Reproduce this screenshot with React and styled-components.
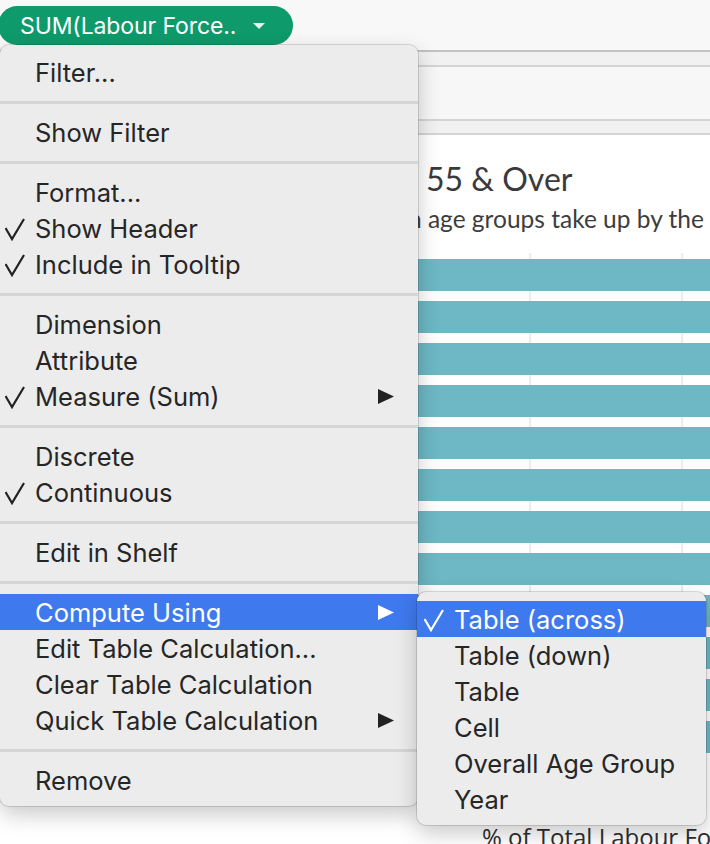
import styled, { createGlobalStyle } from "styled-components";

const GlobalStyle = createGlobalStyle`
  html, body {
    margin: 0;
    padding: 0;
    background: #ffffff;
    overflow: hidden;
  }
`;

const Page = styled.div`
  position: relative;
  width: 710px;
  height: 844px;
  overflow: hidden;
  background: #ffffff;
  font-family: Inter, "Liberation Sans", sans-serif;
`;

const TopBar = styled.div`
  height: 52px;
  background: #f8f8f8;
  border-bottom: 2px solid #c2c2c2;
  display: flex;
  align-items: flex-start;
  padding-top: 6px;
  box-sizing: border-box;
`;

const Pill = styled.div`
  height: 39px;
  margin-left: -2px;
  padding: 0 28px 0 22px;
  border-radius: 20px;
  background: #0e9a6b;
  color: #ffffff;
  display: flex;
  align-items: center;
  gap: 17px;
  font-family: Inter, "Liberation Sans", sans-serif;
  font-size: 23px;
  letter-spacing: -0.1px;
`;

const ShelfBand = styled.div`
  height: ${(props) => props.h}px;
  background: ${(props) => props.bg};
  border-bottom: 2px solid #d4d4d4;
  box-sizing: border-box;
`;

const ChartArea = styled.div`
  background: #ffffff;
  padding-top: 24px;
`;

const Title = styled.div`
  font-family: Lato, "Open Sans", sans-serif;
  font-size: 32px;
  line-height: 40px;
  color: #3a3a3a;
  padding-left: 426px;
`;

const Subtitle = styled.div`
  font-family: Lato, "Open Sans", sans-serif;
  font-size: 24.5px;
  line-height: 30px;
  color: #3d3d3d;
  padding-left: 408px;
  margin-top: 5px;
  white-space: nowrap;
`;

const Plot = styled.div`
  margin-top: 19px;
  padding: 6px 0 16px;
  display: flex;
  flex-direction: column;
  gap: 10px;
  background:
    linear-gradient(to right, transparent 529px, #ececec 529px, #ececec 531px, transparent 531px),
    linear-gradient(to right, transparent 681px, #ececec 681px, #ececec 683px, transparent 683px);
`;

const Bar = styled.div`
  height: 32px;
  background: #6eb7c4;
`;

const AxisTitle = styled.div`
  margin-top: 54px;
  padding-left: 482px;
  font-family: "Open Sans", Lato, sans-serif;
  font-weight: 500;
  font-size: 24px;
  line-height: 28px;
  color: #2e2e2e;
  white-space: nowrap;
`;

const Menu = styled.div`
  position: absolute;
  top: ${(props) => props.top}px;
  left: ${(props) => props.left};
  width: ${(props) => props.width}px;
  background: #ececec;
  border-radius: 9px;
  padding: 9px 0 8px;
  box-shadow: 0 0 0 1px rgba(0, 0, 0, 0.13), 0 8px 22px rgba(0, 0, 0, 0.22);
  z-index: ${(props) => props.z || 10};
`;

const Item = styled.div`
  position: relative;
  height: 36px;
  display: flex;
  align-items: center;
  padding-right: 24px;
  font-size: 25.5px;
  color: ${(props) => (props.active ? "#ffffff" : "#262626")};
  background: ${(props) => (props.active ? "#3f79ee" : "transparent")};
  white-space: nowrap;
`;

const CheckCell = styled.span`
  width: ${(props) => props.w}px;
  flex: none;
  display: flex;
  align-items: center;
  padding-left: ${(props) => props.off}px;
  box-sizing: border-box;
  height: 100%;
`;

const Label = styled.span`
  flex: 1;
`;

const Separator = styled.div`
  height: 24px;
  display: flex;
  align-items: center;
  &::after {
    content: "";
    display: block;
    width: 100%;
    height: 3px;
    background: #d6d6d6;
  }
`;

const Check = ({ color }) => (
  <svg width="21" height="36" viewBox="0 0 21 36">
    <polyline points="0.5,18 7,29 19,9" fill="none" stroke={color} strokeWidth="2.2" />
  </svg>
);

const Arrow = ({ color }) => (
  <svg width="16" height="15" viewBox="0 0 16 15">
    <polygon points="0,0 16,7.5 0,15" fill={color} />
  </svg>
);

const Caret = () => (
  <svg width="12" height="6" viewBox="0 0 12 6">
    <polygon points="0,0 12,0 6,6" fill="#e8f5ef" />
  </svg>
);

const mainMenu = [
  [{ label: "Filter..." }],
  [{ label: "Show Filter" }],
  [
    { label: "Format..." },
    { label: "Show Header", checked: true },
    { label: "Include in Tooltip", checked: true },
  ],
  [
    { label: "Dimension" },
    { label: "Attribute" },
    { label: "Measure (Sum)", checked: true, sub: true },
  ],
  [{ label: "Discrete" }, { label: "Continuous", checked: true }],
  [{ label: "Edit in Shelf" }],
  [
    { label: "Compute Using", sub: true, active: true, submenu: true },
    { label: "Edit Table Calculation..." },
    { label: "Clear Table Calculation" },
    { label: "Quick Table Calculation", sub: true },
  ],
  [{ label: "Remove" }],
];

const computeOptions = [
  { label: "Table (across)", checked: true, active: true },
  { label: "Table (down)" },
  { label: "Table" },
  { label: "Cell" },
  { label: "Overall Age Group" },
  { label: "Year" },
];

const MenuRow = ({ item, checkWidth, checkOffset, children }) => {
  const fg = item.active ? "#ffffff" : "#222222";
  return (
    <Item active={item.active}>
      <CheckCell w={checkWidth} off={checkOffset}>
        {item.checked && <Check color={fg} />}
      </CheckCell>
      <Label>{item.label}</Label>
      {item.sub && <Arrow color={fg} />}
      {children}
    </Item>
  );
};

const ComputeMenu = () => (
  <Menu top={-2} left="calc(100% - 1px)" width={289} z={20}>
    {computeOptions.map((opt) => (
      <MenuRow key={opt.label} item={opt} checkWidth={37} checkOffset={7} />
    ))}
  </Menu>
);

const App = () => {
  const bars = Array.from({ length: 12 }, (_, i) => i);

  return (
    <Page>
      <GlobalStyle />
      <TopBar>
        <Pill>
          <span>SUM(Labour Force..</span>
          <Caret />
        </Pill>
      </TopBar>
      <ShelfBand h={15} bg="#f1f1f1" />
      <ShelfBand h={54} bg="#f7f7f7" />
      <ShelfBand h={14} bg="#f1f1f1" />
      <ChartArea>
        <Title>55 &amp; Over</Title>
        <Subtitle>n age groups take up by the</Subtitle>
        <Plot>
          {bars.map((b) => (
            <Bar key={b} />
          ))}
        </Plot>
        <AxisTitle>% of Total Labour Fo</AxisTitle>
      </ChartArea>

      <Menu top={45} left="0px" width={418}>
        {mainMenu.map((group, gi) => (
          <div key={gi}>
            {gi > 0 && <Separator />}
            {group.map((item) => (
              <MenuRow key={item.label} item={item} checkWidth={35} checkOffset={5}>
                {item.submenu && <ComputeMenu />}
              </MenuRow>
            ))}
          </div>
        ))}
      </Menu>
    </Page>
  );
};

export default App;
